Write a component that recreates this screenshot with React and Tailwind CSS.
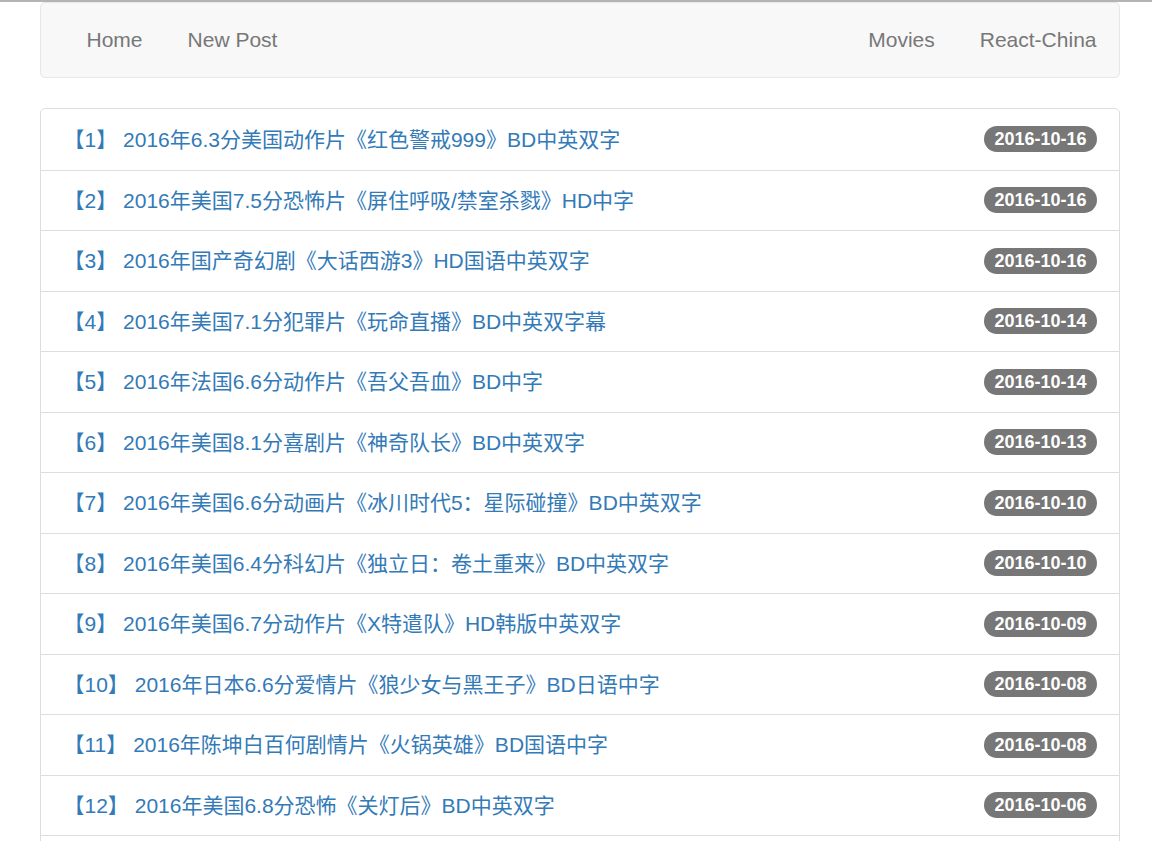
const movies = [
  { title: "2016年6.3分美国动作片《红色警戒999》BD中英双字", date: "2016-10-16" },
  { title: "2016年美国7.5分恐怖片《屏住呼吸/禁室杀戮》HD中字", date: "2016-10-16" },
  { title: "2016年国产奇幻剧《大话西游3》HD国语中英双字", date: "2016-10-16" },
  { title: "2016年美国7.1分犯罪片《玩命直播》BD中英双字幕", date: "2016-10-14" },
  { title: "2016年法国6.6分动作片《吾父吾血》BD中字", date: "2016-10-14" },
  { title: "2016年美国8.1分喜剧片《神奇队长》BD中英双字", date: "2016-10-13" },
  { title: "2016年美国6.6分动画片《冰川时代5：星际碰撞》BD中英双字", date: "2016-10-10" },
  { title: "2016年美国6.4分科幻片《独立日：卷土重来》BD中英双字", date: "2016-10-10" },
  { title: "2016年美国6.7分动作片《X特遣队》HD韩版中英双字", date: "2016-10-09" },
  { title: "2016年日本6.6分爱情片《狼少女与黑王子》BD日语中字", date: "2016-10-08" },
  { title: "2016年陈坤白百何剧情片《火锅英雄》BD国语中字", date: "2016-10-08" },
  { title: "2016年美国6.8分恐怖《关灯后》BD中英双字", date: "2016-10-06" },
  { title: "2016年美国6.9分动作片《惊天魔盗团2》BD中英双字", date: "2016-10-05" },
];

export default function App() {
  return (
    <div
      className="min-h-screen bg-white"
      style={{ fontFamily: '"Liberation Sans", Arial, "Noto Sans CJK SC", sans-serif' }}
    >
      <div className="h-[2px] bg-[#b4b4b4]"></div>

      <div className="ml-[40px] w-[1080px]">
        {/* NAVBAR */}
        <nav className="h-[76px] bg-[#f8f8f8] border border-[#e7e7e7] rounded-[5px] flex items-center justify-between pl-[23px]">
          <div className="flex">
            <a className="px-[22.5px] text-[21px] text-[#777]">Home</a>
            <a className="px-[22.5px] text-[21px] text-[#777]">New Post</a>
          </div>
          <div className="flex">
            <a className="px-[22.5px] text-[21px] text-[#777]">Movies</a>
            <a className="px-[22.5px] text-[21px] text-[#777]">React-China</a>
          </div>
        </nav>

        {/* LIST */}
        <ul className="mt-[30px] border border-[#ddd] rounded-[5px]">
          {movies.map((m, i) => (
            <li
              key={i}
              className={
                "h-[60.5px] flex items-center justify-between pl-[22.5px] pr-[22px] " +
                (i > 0 ? "border-t border-[#ddd]" : "")
              }
            >
              <a className="text-[21px] text-[#337ab7]">
                【{i + 1}】 {m.title}
              </a>
              <span className="bg-[#777] text-white font-bold text-[18px] leading-none py-[4px] px-[10.5px] rounded-full">
                {m.date}
              </span>
            </li>
          ))}
        </ul>
      </div>
    </div>
  );
}
